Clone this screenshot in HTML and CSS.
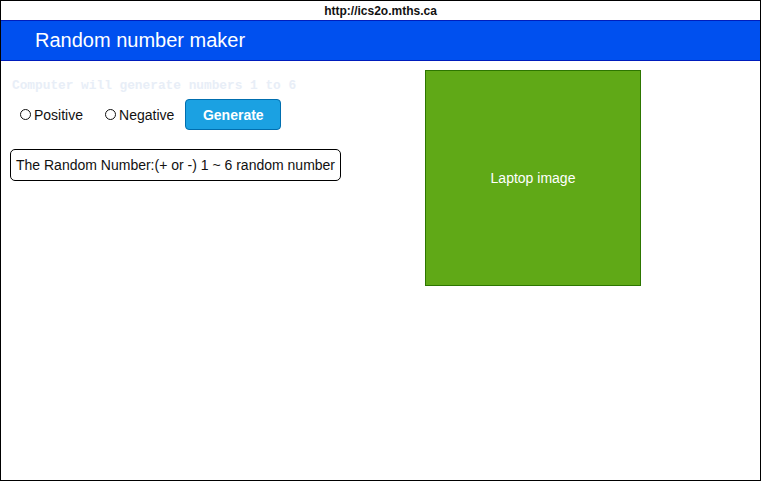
FILE: index.html
```html
<!DOCTYPE html>
<html>
<head>
<meta charset="utf-8">
<link rel="stylesheet" href="styles.css">
</head>
<body>
<div class="frame">
  <div class="urlbar">http://ics2o.mths.ca</div>
  <header class="titlebar">Random number maker</header>
  <main class="content">
    <section class="left">
      <p class="hint">Computer will generate numbers 1 to 6</p>
      <div class="controls">
        <label class="radio"><span class="dot"></span>Positive</label>
        <label class="radio"><span class="dot"></span>Negative</label>
        <button class="btn">Generate</button>
      </div>
      <div class="output">The Random Number:(+ or -) 1 ~ 6 random number</div>
    </section>
    <section class="right">
      <div class="laptop">Laptop image</div>
    </section>
  </main>
</div>
</body>
</html>
```
FILE: styles.css
```css
html, body {
  margin: 0;
  padding: 0;
  background: #fff;
}
body {
  font-family: "Liberation Sans", Arial, sans-serif;
  width: 761px;
  height: 482px;
}
.frame {
  box-sizing: border-box;
  width: 761px;
  height: 481px;
  border: 1px solid #000;
  display: flex;
  flex-direction: column;
}
.urlbar {
  height: 19px;
  line-height: 20px;
  text-align: center;
  font-size: 12px;
  font-weight: bold;
  color: #111;
}
.titlebar {
  box-sizing: border-box;
  height: 41px;
  background: #0050ef;
  border-top: 1px solid #001dbc;
  border-bottom: 1px solid #001dbc;
  color: #fff;
  font-size: 20px;
  line-height: 39px;
  padding-left: 34px;
}
.content {
  display: flex;
  padding-top: 9px;
}
.left {
  width: 424px;
  padding-left: 9px;
  box-sizing: border-box;
}
.hint {
  margin: 0;
  padding-left: 2px;
  padding-top: 8px;
  font-family: "Liberation Mono", "DejaVu Sans Mono", monospace;
  font-size: 12.8px;
  line-height: 15px;
  color: #e8eef7;
  font-weight: bold;
}
.controls {
  display: flex;
  align-items: center;
  margin-top: 6px;
  height: 31px;
}
.radio {
  display: flex;
  align-items: center;
  font-size: 14px;
  color: #111;
}
.radio:first-child {
  margin-left: 10px;
  margin-right: 22px;
}
.radio + .radio {
  margin-right: 11px;
}
.dot {
  box-sizing: border-box;
  width: 11px;
  height: 11px;
  border: 1px solid #111;
  border-radius: 50%;
  margin-right: 3px;
}
.btn {
  box-sizing: border-box;
  width: 96px;
  height: 31px;
  background: #1ba1e2;
  border: 1px solid #006eaf;
  border-radius: 4px;
  color: #fff;
  font-family: "Liberation Sans", Arial, sans-serif;
  font-weight: bold;
  font-size: 14px;
  padding: 0;
}
.output {
  box-sizing: border-box;
  margin-top: 19px;
  width: 331px;
  height: 32px;
  border: 1px solid #000;
  border-radius: 5px;
  font-size: 14px;
  line-height: 30px;
  padding-left: 5px;
  color: #111;
  white-space: nowrap;
}
.right {
  display: flex;
}
.laptop {
  box-sizing: border-box;
  width: 216px;
  height: 216px;
  background: #60a917;
  border: 1px solid #2d7600;
  color: #fff;
  font-size: 14px;
  display: flex;
  align-items: center;
  justify-content: center;
}
```
